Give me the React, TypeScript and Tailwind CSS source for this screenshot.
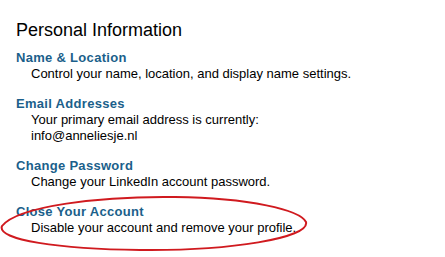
export default function App() {
  const sections = [
    { title: "Name & Location", lines: ["Control your name, location, and display name settings."] },
    { title: "Email Addresses", lines: ["Your primary email address is currently:", "info@anneliesje.nl"] },
    { title: "Change Password", lines: ["Change your LinkedIn account password."] },
    { title: "Close Your Account", lines: ["Disable your account and remove your profile."] },
  ];

  return (
    <div className="relative w-[445px] h-[257px] bg-white overflow-hidden font-['Liberation_Sans',Arial,sans-serif]">
      <div className="pt-[19px] pl-4">
        <h1 className="text-[18px] leading-[22px] text-black">Personal Information</h1>
        <div className="mt-[9px] flex flex-col gap-[14px]">
          {sections.map((s) => (
            <div key={s.title}>
              <a href="#" className="block text-[13px] leading-4 font-bold text-[#1b5f8b] tracking-[0.3px]">
                {s.title}
              </a>
              {s.lines.map((l, i) => (
                <p key={i} className={`text-[13px] leading-4 text-black ${i === 0 ? "pl-[15px]" : "pl-[15px]"}`}>
                  {l}
                </p>
              ))}
            </div>
          ))}
        </div>
      </div>

      {/* hand drawn red ring around the last item */}
      <svg className="absolute left-0 top-0 pointer-events-none" width="445" height="257" viewBox="0 0 445 257">
        <path
          d="M 2 226 C 18 206, 100 196, 175 197 C 250 198, 300 210, 306 222 C 310 238, 230 251, 140 250 C 60 249, -4 240, 2 226 Z"
          fill="none"
          stroke="#d01a1f"
          strokeWidth="2"
        />
      </svg>
    </div>
  );
}
